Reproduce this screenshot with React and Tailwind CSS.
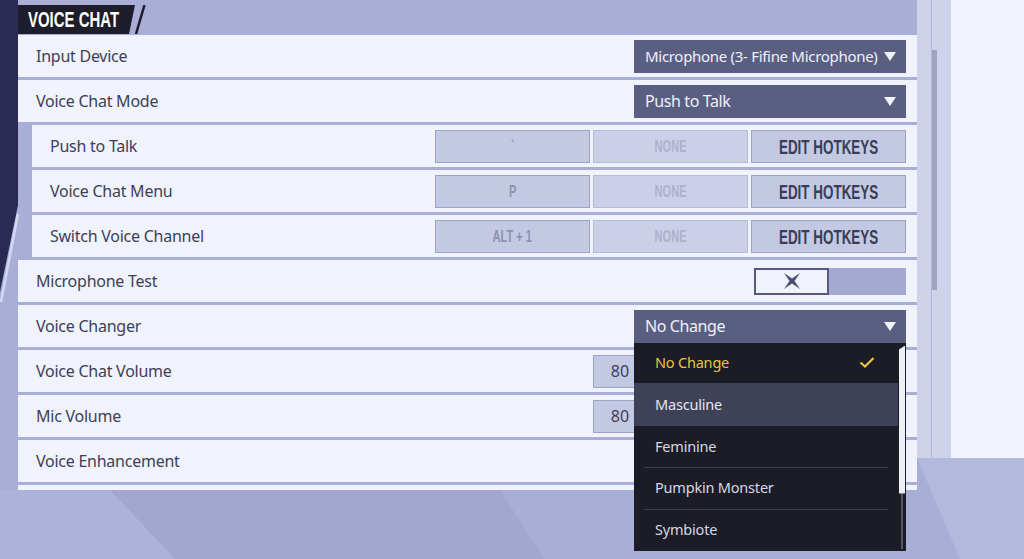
import React from "react";

const Arrow = () => (
  <svg width="12" height="9" viewBox="0 0 12 9" className="shrink-0">
    <path d="M0 0H12L6 9Z" fill="#f2f3fa" />
  </svg>
);

function Row({ label, sub, children }) {
  return (
    <div
      className={
        sub
          ? "ml-[14px] flex h-[42px] items-center bg-[#f0f3fc] pl-[18px] pr-[11px]"
          : "flex h-[42px] items-center bg-[#f0f3fc] pl-[18px] pr-[11px]"
      }
    >
      <span className="flex-1 whitespace-nowrap font-['Noto_Sans'] text-[16px] tracking-[-0.25px] text-[#3d4058]">
        {label}
      </span>
      {children}
    </div>
  );
}

function Select({ value, small }) {
  return (
    <div className="flex h-[33px] w-[272px] items-center justify-between bg-[#5a5f82] pl-[11px] pr-[10px]">
      <span
        className={
          small
            ? "whitespace-nowrap font-['Noto_Sans'] text-[15px] tracking-[-0.3px] text-[#eef0fa]"
            : "whitespace-nowrap font-['Noto_Sans'] text-[16px] tracking-[-0.4px] text-[#eef0fa]"
        }
      >
        {value}
      </span>
      <Arrow />
    </div>
  );
}

function Cond({ children, className }) {
  return (
    <span
      className={
        "inline-block whitespace-nowrap font-['Liberation_Sans'] font-bold leading-none " + className
      }
    >
      {children}
    </span>
  );
}

function Hotkeys({ k }) {
  return (
    <div className="flex gap-[3px]">
      <div className="flex h-[33px] w-[155px] items-center justify-center border border-[#9da3c2] bg-[#c3c9e3]">
        <Cond className="scale-x-[0.65] text-[17px] text-[#8d92ab]">{k}</Cond>
      </div>
      <div className="flex h-[33px] w-[155px] items-center justify-center border border-[#b7bcd6] bg-[#cbd0e8]">
        <Cond className="scale-x-[0.65] text-[17px] text-[#adb2cb]">NONE</Cond>
      </div>
      <div className="flex h-[33px] w-[155px] items-center justify-center border border-[#9da3c2] bg-[#c3c9e3]">
        <Cond className="scale-x-[0.64] text-[21px] text-[#3a3d55]">EDIT HOTKEYS</Cond>
      </div>
    </div>
  );
}

function Volume() {
  return (
    <div className="flex items-center gap-[4px]">
      <div className="flex h-[33px] w-[54px] items-center justify-center border border-[#9da3c2] bg-[#c3c9e3] font-['Noto_Sans'] text-[16px] text-[#3d4058]">
        80
      </div>
      <div className="h-[8px] w-[255px] bg-[#c3c9e3]" />
    </div>
  );
}

function Menu() {
  const item =
    "flex items-center whitespace-nowrap pl-[21px] font-['Noto_Sans'] text-[14.5px] tracking-[-0.2px]";
  return (
    <div className="absolute left-0 top-full z-10 flex h-[208px] w-[272px] bg-[#1c1c26]">
      <div className="flex flex-1 flex-col">
        <div className={item + " h-[41px] justify-between pr-[23px] text-[#e6c63a]"}>
          <span>No Change</span>
          <svg width="16" height="11" viewBox="0 0 16 11">
            <path d="M1.5 5.5L6 9.5L14.5 1" stroke="#e6c63a" strokeWidth="2.2" fill="none" />
          </svg>
        </div>
        <div className={item + " h-[43px] bg-[#3e4158] text-[#e4e6f2]"}>Masculine</div>
        <div className={item + " h-[41px] text-[#d5d8e8]"}>Feminine</div>
        <div className="mx-[10px] h-px bg-[#3c3e4e]" />
        <div className={item + " h-[41px] text-[#d5d8e8]"}>Pumpkin Monster</div>
        <div className="mx-[10px] h-px bg-[#3c3e4e]" />
        <div className={item + " h-[41px] text-[#d5d8e8]"}>Symbiote</div>
      </div>
      <div className="flex w-[8px] flex-col items-center pt-[3px] pb-[2px]">
        <div className="h-[148px] w-[6px] bg-[#eef0f6] [clip-path:polygon(0_4px,100%_0,100%_100%,0_100%)]" />
        <div className="w-[2px] flex-1 bg-[#55586a]" />
      </div>
    </div>
  );
}

export default function App() {
  return (
    <div className="relative h-[559px] w-[1024px] overflow-hidden bg-[#a9aed6]">
      <svg className="absolute inset-0" width="1024" height="559" viewBox="0 0 1024 559">
        <polygon points="110,490 500,490 545,559 175,559" fill="#a3a7cf" />
        <polygon points="0,490 110,490 175,559 0,559" fill="#adb2d9" />
        <polygon points="917,458 1024,458 1024,559 960,559" fill="#b3b8dd" />
        <polygon points="0,0 18,0 18,205 0,292" fill="#2a2a54" />
        <line x1="18" y1="214" x2="1" y2="302" stroke="#d4d8ef" strokeWidth="2.5" />
      </svg>

      <div className="relative flex">
        <div className="w-[18px] shrink-0" />

        <div className="flex w-[899px] shrink-0 flex-col">
          <div className="flex h-[35px] items-start pt-[5px]">
            <div className="flex h-[29px] w-[117px] items-center bg-[#1d1d2b] pl-[10px] [clip-path:polygon(0_0,100%_0,calc(100%-6px)_100%,0_100%)]">
              <Cond className="origin-left scale-x-[0.68] text-[22px] text-white">VOICE CHAT</Cond>
            </div>
            <svg width="12" height="29" viewBox="0 0 12 29" className="-ml-[1px]">
              <line x1="10.5" y1="0" x2="2" y2="29" stroke="#1d1d2b" strokeWidth="2.5" />
            </svg>
          </div>

          <div className="flex flex-col gap-[3px]">
            <Row label="Input Device">
              <Select small value="Microphone (3- Fifine Microphone)" />
            </Row>
            <Row label="Voice Chat Mode">
              <Select value="Push to Talk" />
            </Row>
            <Row sub label="Push to Talk">
              <Hotkeys k="`" />
            </Row>
            <Row sub label="Voice Chat Menu">
              <Hotkeys k="P" />
            </Row>
            <Row sub label="Switch Voice Channel">
              <Hotkeys k="ALT + 1" />
            </Row>
            <Row label="Microphone Test">
              <div className="flex h-[27px] w-[152px]">
                <div className="flex w-[75px] items-center justify-center border-2 border-[#565a7e] bg-[#f0f3fc]">
                  <svg width="18" height="18" viewBox="-9 -9 18 18">
                    <polygon points="-8,-8 0,-2.5 8,-8 2.5,0 8,8 0,2.5 -8,8 -2.5,0" fill="#4a4e72" />
                  </svg>
                </div>
                <div className="flex-1 bg-[#a4a9d1]" />
              </div>
            </Row>
            <Row label="Voice Changer">
              <div className="relative">
                <Select value="No Change" />
                <Menu />
              </div>
            </Row>
            <Row label="Voice Chat Volume">
              <Volume />
            </Row>
            <Row label="Mic Volume">
              <Volume />
            </Row>
            <Row label="Voice Enhancement" />
            <div className="h-[5px] bg-[#f0f3fc]" />
          </div>
        </div>

        <div className="flex h-[458px] w-[34px] shrink-0 bg-[#cfd3ea] pl-[14px]">
          <div className="flex h-full w-[6px] flex-col border-l border-[#b2b6d2]">
            <div className="h-[50px]" />
            <div className="h-[240px] w-[5px] bg-[#a0a4bf]" />
          </div>
        </div>
        <div className="h-[458px] w-[73px] shrink-0 bg-[#f0f3fc]" />
      </div>
    </div>
  );
}
